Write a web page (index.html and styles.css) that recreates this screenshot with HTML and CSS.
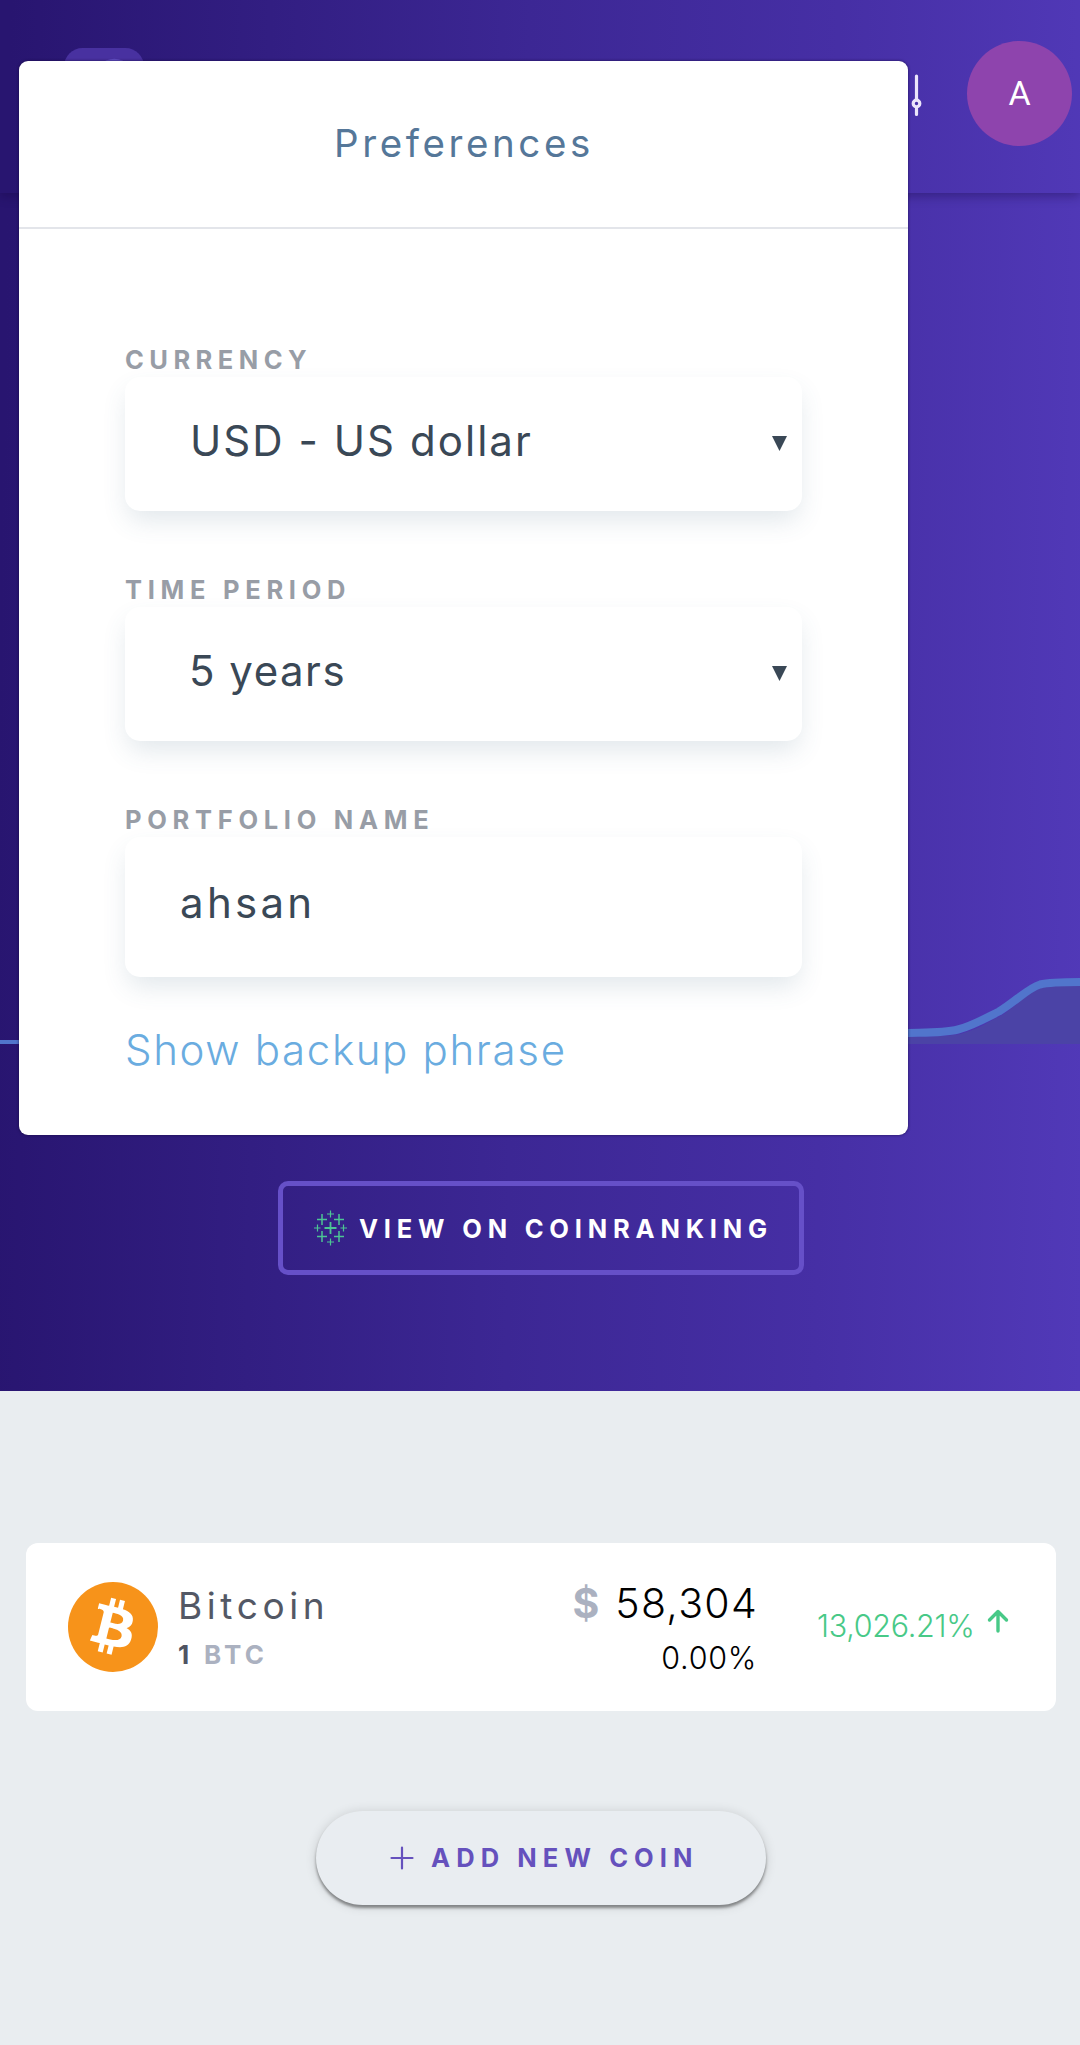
FILE: index.html
```
<!DOCTYPE html>
<html lang="en">
<head>
<meta charset="utf-8">
<title>Portfolio</title>
<link rel="stylesheet" href="styles.css">
</head>
<body>
<main class="hero">
  <header class="topbar">
    <svg class="logo" viewBox="0 0 78 78"><rect width="78" height="78" rx="18" fill="#4831a0"/><circle cx="49" cy="30" r="19.5" fill="#6350c6"/></svg>
    <svg class="sliders" viewBox="0 0 50 44" fill="none" stroke="#ece6fb" stroke-width="3.2" stroke-linecap="round"><path d="M8 2v22M8 33v7M25 2v9M25 20v20M41.5 2v23M41.5 34.500v6"/><circle cx="8" cy="28.500" r="3.300"/><circle cx="25" cy="15.500" r="3.300"/><circle cx="41.500" cy="29.500" r="3.300"/></svg>
    <div class="avatar">A</div>
  </header>
  <svg class="chart" viewBox="0 0 1080 66">
    <path d="M760 66C830 66 880 59 908 59C940 59 950 57 960 56C978 51 984 46 1000 38C1016 29 1028 13 1042 7C1052 4 1066 4 1080 4V66Z" fill="#4b43a6"/>
    <path d="M0 66H760C830 66 850 55 908 55C928 54.500 944 55 958 51.500C972 48 984 41 999 33.500C1015 24 1028 10 1040 6.500C1050 4 1066 4 1080 4" fill="none" stroke="#5175cc" stroke-width="8"/>
  </svg>
  <a class="ranking">
    <svg class="ranking-icon" viewBox="0 0 34 36" fill="none" stroke="#4cc594"><path stroke-width="1.800" d="M17 12v12M11 18h12"/><path stroke-width="1.500" d="M8.500 4v11M3.500 9.500h10M25.500 4v11M20.500 9.500h10M8.500 21v11M3.500 26.500h10M25.500 21v11M20.500 26.500h10"/><path stroke-width="1.200" d="M17 .500v7M13.500 4h7M17 28.500v7M13.500 32h7M4 14.500v7M.500 18h6.500M30 14.500v7M27 18h6.500"/></svg>
    <span>VIEW ON COINRANKING</span>
  </a>
</main>

<section class="coins">
  <article class="coin">
    <svg class="coin-logo" viewBox="0 0 64 64"><circle cx="32" cy="32" r="32" fill="#f7931a"/><path fill="#fff" d="M46.100 27.440c.640-4.260-2.600-6.550-7.040-8.080l1.440-5.770-3.510-.880-1.400 5.620c-.930-.230-1.870-.450-2.820-.660l1.410-5.660-3.510-.870-1.440 5.770c-.760-.170-1.520-.350-2.240-.530v-.020l-4.840-1.210-.940 3.750s2.610.600 2.550.640c1.420.350 1.680 1.300 1.640 2.050l-3.950 15.820c-.170.430-.610 1.080-1.610.840.040.050-2.550-.640-2.550-.640l-1.750 4.020 4.570 1.140c.850.210 1.680.440 2.500.650l-1.450 5.830 3.500.880 1.440-5.770c.960.260 1.890.500 2.800.730l-1.430 5.740 3.510.880 1.450-5.820c5.990 1.130 10.490.680 12.380-4.740 1.530-4.360-.080-6.880-3.230-8.520 2.300-.530 4.030-2.040 4.490-5.160zm-8.020 11.250c-1.090 4.360-8.430 2-10.810 1.410l1.930-7.730c2.380.600 10.010 1.770 8.880 6.320zm1.090-11.310c-.990 3.970-7.100 1.950-9.080 1.460l1.750-7.010c1.980.490 8.360 1.410 7.330 5.550z"/></svg>
    <div class="coin-id">
      <div class="coin-name">Bitcoin</div>
      <div class="coin-amount">1 <span>BTC</span></div>
    </div>
    <div class="worth">
      <div class="price"><span>$</span><b>58,304</b></div>
      <div class="share">0.00%</div>
    </div>
    <div class="change">13,026.21%</div>
    <svg class="arrow" viewBox="0 0 22 24" fill="none" stroke="#48c987" stroke-width="3.400" stroke-linecap="round" stroke-linejoin="round"><path d="M11 22V3M2.500 11L11 2.500L19.500 11"/></svg>
  </article>
  <button class="add">
    <svg class="plus" viewBox="0 0 24 24" stroke="#6551bd" stroke-width="2.200" stroke-linecap="round"><path d="M12 1.500v21M1.500 12h21"/></svg>
    <span>ADD NEW COIN</span>
  </button>
</section>

<div class="modal">
  <h1 class="modal-title">Preferences</h1>
  <div class="modal-body">
    <div class="label currency">CURRENCY</div>
    <div class="select"><span>USD - US dollar</span><i class="caret"></i></div>
    <div class="label period">TIME PERIOD</div>
    <div class="select years"><span>5 years</span><i class="caret"></i></div>
    <div class="label name">PORTFOLIO NAME</div>
    <div class="input">ahsan</div>
    <a class="backup">Show backup phrase</a>
  </div>
</div>
</body>
</html>
```

FILE: styles.css
```
* { box-sizing: border-box; }
body { margin: 0; position: relative; height: 2045px; overflow: hidden; background: #e9edf0; font-family: Inter, sans-serif; }

.hero { height: 1391px; display: flex; flex-direction: column; align-items: center; background: linear-gradient(91deg, #281570 1%, #3c2794 48%, #462fa5 76%, #5139b8 100%); }
.topbar { width: 100%; height: 193px; flex: none; padding: 0 8px 0 64px; display: flex; align-items: flex-start; box-shadow: 0 3px 10px rgba(20, 5, 60, .38); }
.logo { width: 80px; height: 80px; margin-top: 48px; }
.sliders { width: 50px; height: 44px; margin: 74px 42px 0 auto; }
.avatar { width: 105px; height: 105px; margin-top: 41px; border-radius: 50%; background: #8e44ad; color: #fff; font: 34px/104px Roboto, sans-serif; text-align: center; }
.chart { width: 1080px; height: 66px; margin-top: 785px; display: block; flex: none; overflow: hidden; }

.ranking { width: 526px; height: 94px; margin: 137px 0 0 2px; border: 5px solid #6650c8; border-radius: 10px; display: flex; align-items: center; padding-left: 30px; color: #fff; font-size: 25.500px; font-weight: 700; letter-spacing: 5.800px; white-space: nowrap; }
.ranking-icon { width: 35px; height: 36px; flex: none; margin-right: 11px; }

.coins { padding: 152px 24px 0 26px; display: flex; flex-direction: column; }
.coin { height: 168px; border-radius: 12px; background: #fff; display: flex; padding-left: 42px; }
.coin-logo { width: 90px; height: 90px; margin-top: 39px; flex: none; }
.coin-id { width: 240px; flex: none; margin-left: 20px; padding-top: 38px; }
.coin-name { font-size: 37px; line-height: 50px; letter-spacing: 4.600px; color: #535865; }
.coin-amount { font-size: 26px; line-height: 48px; font-weight: 700; letter-spacing: 4.300px; color: #4f5462; }
.coin-amount span { color: #abb1c0; }
.worth { flex: none; width: 341px; padding: 35px 1px 0 0; text-align: right; color: #000; }
.price { display: flex; justify-content: flex-end; align-items: center; height: 51px; padding-bottom: 1px; }
.price span { font-size: 41px; font-weight: 700; color: #abb1c0; margin-right: 16px; }
.price b { font-size: 41px; font-weight: 300; letter-spacing: 1.300px; }
.share { padding-right: 1px; font-size: 30.500px; line-height: 58px; font-weight: 300; letter-spacing: .700px; }
.change { width: 158px; flex: none; margin-left: 58px; font-size: 30.500px; line-height: 166px; font-weight: 300; letter-spacing: -.300px; color: #48c987; white-space: nowrap; }
.arrow { width: 22px; height: 24px; margin: 66px 0 0 12px; flex: none; }

.add { width: 450px; height: 94px; margin: 100px 0 0 290px; padding: 0 0 0 74px; border: 0; border-radius: 47px; background: #e9edf1; box-shadow: 0 3px 3px rgba(0, 0, 0, .4), 0 1px 12px rgba(0, 0, 0, .14); display: flex; align-items: center; color: #6551bd; font: 700 25.500px/94px Inter, sans-serif; letter-spacing: 6.100px; white-space: nowrap; }
.plus { width: 24px; height: 24px; margin-right: 17px; flex: none; }

.modal { position: absolute; left: 19px; top: 61px; width: 889px; height: 1074px; border-radius: 9px; background: #fff; box-shadow: 0 0 3px rgba(20, 8, 60, .8); }
.modal-title { margin: 0; height: 168px; border-bottom: 2px solid #e3e5ea; padding-left: 315px; color: #557799; font-size: 38.500px; line-height: 165px; font-weight: 400; letter-spacing: 3.600px; }
.modal-body { padding: 114px 106px 0; }
.label { height: 34px; color: #989da6; font-size: 25.500px; line-height: 34px; font-weight: 700; letter-spacing: 5.700px; }
.currency { letter-spacing: 5.450px; }
.period { margin-top: 62px; }
.name { margin-top: 62px; }
.select, .input { height: 134px; border-radius: 15px; background: #fff; box-shadow: 0 12px 26px -3px rgba(70, 105, 130, .16); color: #3a4856; font-size: 42px; line-height: 128px; letter-spacing: 2.050px; }
.select { display: flex; align-items: center; justify-content: space-between; padding: 0 15px 6px 65px; }
.years { padding-left: 64px; letter-spacing: 1.500px; }
.caret { width: 15px; height: 15px; background: #3a4856; clip-path: polygon(0 0, 100% 0, 50% 100%); margin-top: 5px; }
.input { height: 140px; line-height: 132px; padding-left: 55px; letter-spacing: 3.300px; }
.backup { display: block; margin-top: 43px; line-height: 60px; font-size: 42px; font-weight: 300; letter-spacing: 1.650px; color: #6aace0; white-space: nowrap; }
```
